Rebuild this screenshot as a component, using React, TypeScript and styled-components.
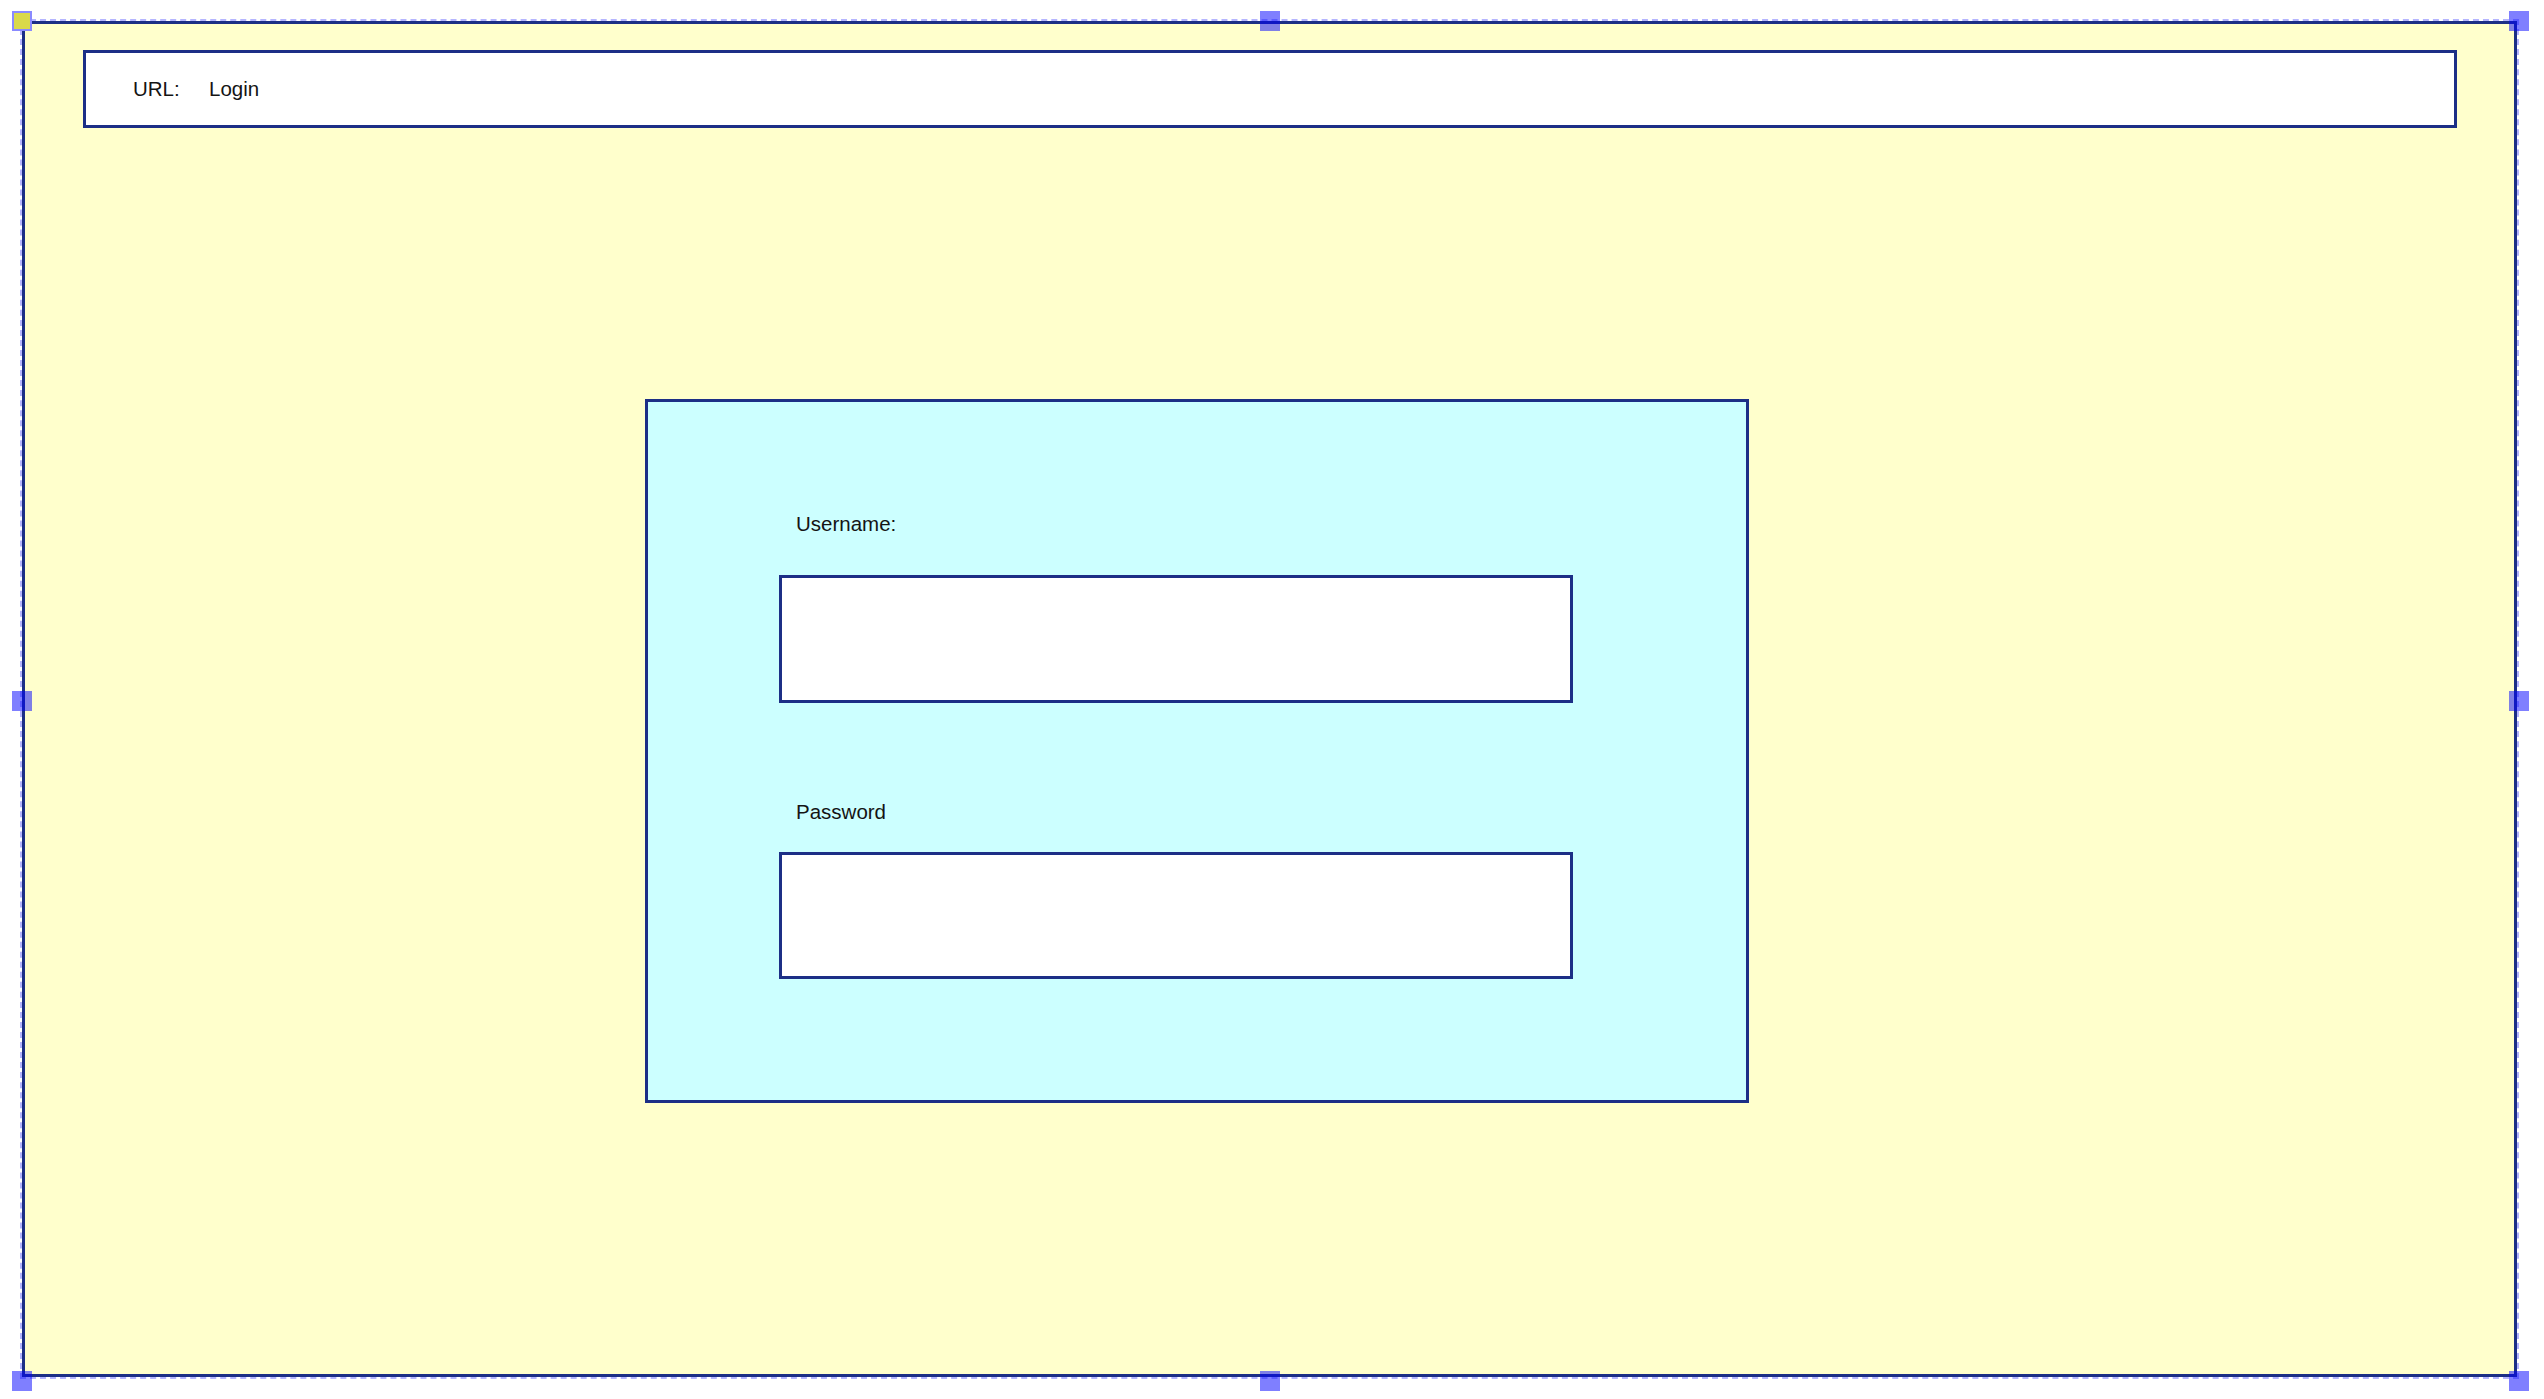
import styled, { createGlobalStyle } from 'styled-components'

const GlobalStyle = createGlobalStyle`
    html, body {
        margin: 0;
        padding: 0;
        background: #ffffff;
    }
    body {
        font-family: "Liberation Sans", Arial, sans-serif;
        color: #141414;
    }
`

const navy = '#1c2f86'

const Page = styled.div`
    padding: 21px 27px 22px 22px;
`

// the selected canvas frame
const Frame = styled.div`
    position: relative;
    box-sizing: border-box;
    width: 2495px;
    height: 1356px;
    border: 3px solid ${navy};
    outline: 2px dashed rgba(110, 110, 255, 0.5);
    background: #ffffcc;
    display: flex;
    flex-direction: column;
    align-items: flex-start;
    gap: 271px;
    padding: 26px 57px 0 58px;
`

const UrlBar = styled.div`
    box-sizing: border-box;
    width: 2374px;
    height: 78px;
    border: 3px solid ${navy};
    background: #ffffff;
    display: flex;
    align-items: center;
    padding-left: 47px;
    font-size: 20.5px;
`

const UrlKey = styled.span`
    width: 76px;
`

const LoginPanel = styled.div`
    box-sizing: border-box;
    width: 1104px;
    height: 704px;
    margin-left: 562px;
    border: 3px solid ${navy};
    background: #ccffff;
    display: flex;
    flex-direction: column;
    align-items: flex-start;
    padding: 112px 0 0 131px;
`

const FieldLabel = styled.div<{ $gap: number }>`
    font-size: 20.5px;
    line-height: 20px;
    padding-left: 17px;
    margin-bottom: ${p => p.$gap}px;
`

const Field = styled.div<{ $h: number; $after?: number }>`
    box-sizing: border-box;
    width: 794px;
    height: ${p => p.$h}px;
    border: 3px solid ${navy};
    background: #ffffff;
    margin-bottom: ${p => p.$after ?? 0}px;
`

const Handle = styled.div<{ $active?: boolean }>`
    position: absolute;
    box-sizing: border-box;
    width: 20px;
    height: 20px;
    background: ${p => (p.$active ? '#d9d94a' : 'rgba(0, 0, 255, 0.5)')};
    border: ${p => (p.$active ? '2px solid #8a8aff' : 'none')};
`

const TopLeft = styled(Handle)`
    left: -13px;
    top: -13px;
`
const TopMid = styled(Handle)`
    left: calc(50% - 10px);
    top: -13px;
`
const TopRight = styled(Handle)`
    right: -15px;
    top: -13px;
`
const MidLeft = styled(Handle)`
    left: -13px;
    top: calc(50% - 8px);
`
const MidRight = styled(Handle)`
    right: -15px;
    top: calc(50% - 8px);
`
const BottomLeft = styled(Handle)`
    left: -13px;
    bottom: -17px;
`
const BottomMid = styled(Handle)`
    left: calc(50% - 10px);
    bottom: -17px;
`
const BottomRight = styled(Handle)`
    right: -15px;
    bottom: -17px;
`

export default function App() {
    return (
        <>
            <GlobalStyle/>
            <Page>
                <Frame>
                    <UrlBar>
                        <UrlKey>URL:</UrlKey>
                        <span>Login</span>
                    </UrlBar>

                    <LoginPanel>
                        <FieldLabel $gap={41}>Username:</FieldLabel>
                        <Field $h={128} $after={99}/>
                        <FieldLabel $gap={30}>Password</FieldLabel>
                        <Field $h={127}/>
                    </LoginPanel>

                    {/* selection handles */}
                    <TopLeft $active/>
                    <TopMid/>
                    <TopRight/>
                    <MidLeft/>
                    <MidRight/>
                    <BottomLeft/>
                    <BottomMid/>
                    <BottomRight/>
                </Frame>
            </Page>
        </>
    )
}
